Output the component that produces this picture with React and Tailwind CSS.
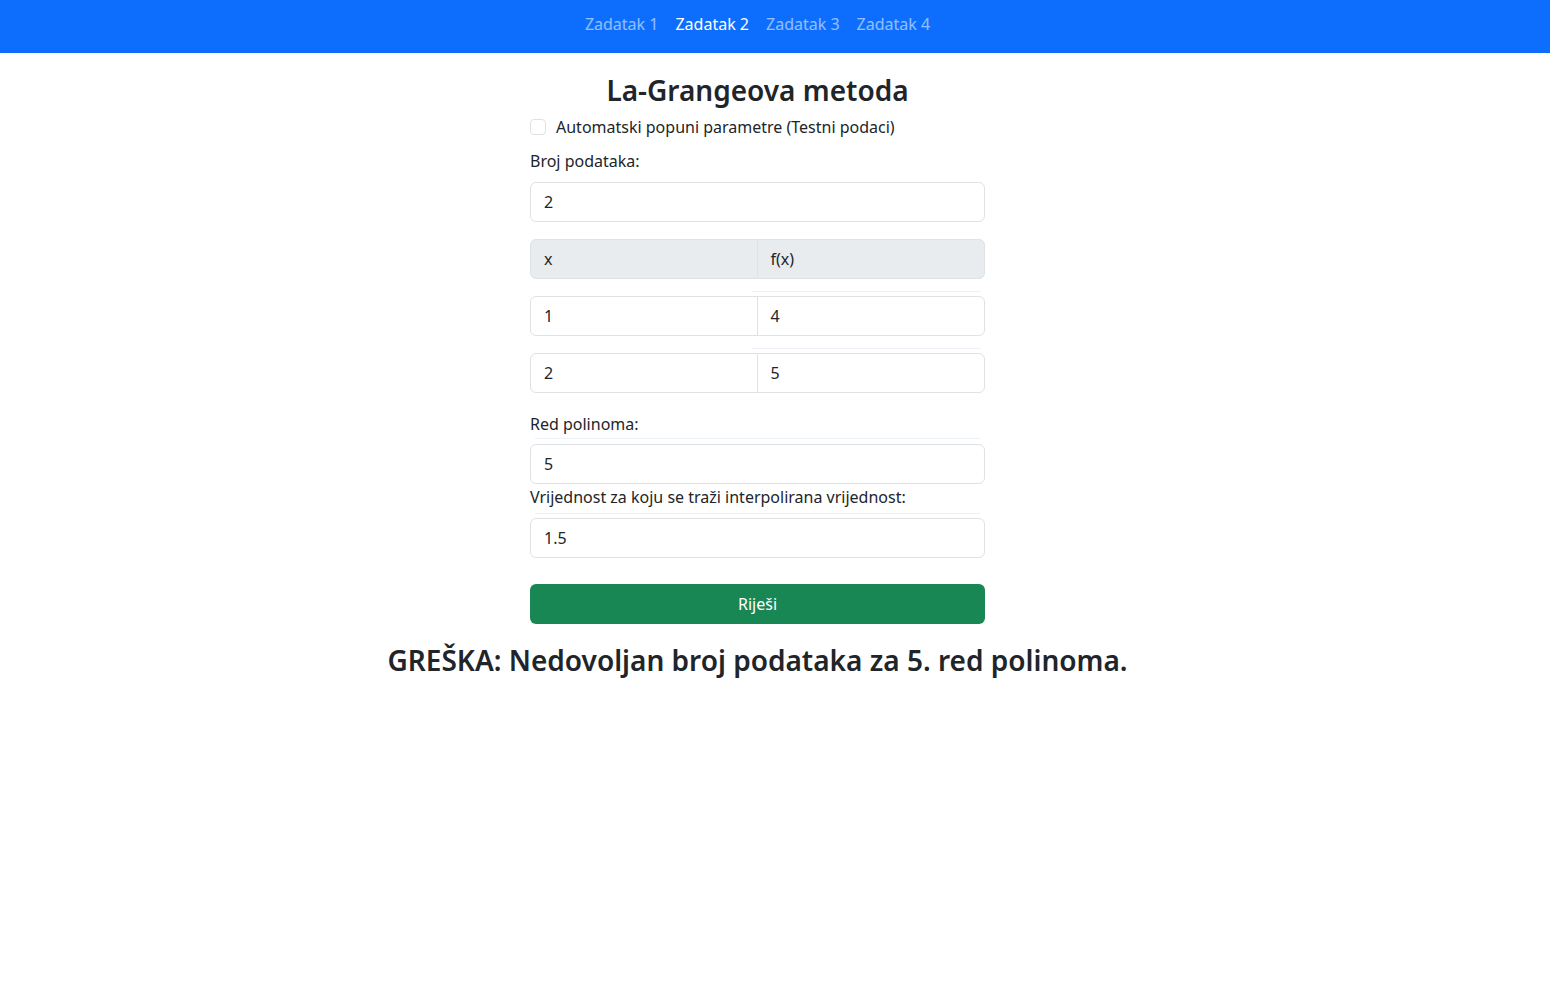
export default function App() {
    const font = { fontFamily: '"Segoe UI", "Noto Sans", "Liberation Sans", sans-serif' };
    const links = ["Zadatak 1", "Zadatak 2", "Zadatak 3", "Zadatak 4"];
    const rows = [["1", "4"], ["2", "5"]];

    const inputClass = "w-full h-10 px-[13px] border border-[#dee2e6] rounded-[6px] bg-white text-[16px] text-[#212529] outline-none";

    return (
        <div className="min-h-[990px] bg-white text-[#212529]" style={font}>
            {/* Navbar */}
            <nav className="h-[53px] bg-[#0d6efd]">
                <div className="w-[1515px] h-full flex justify-center items-center">
                    <div className="flex items-center gap-[1px] -mt-[5px]">
                        {links.map((l, i) => (
                            <a key={l} href="#" className={`px-2 text-[16px] leading-6 ${i === 1 ? "text-white" : "text-white/55"}`}>
                                {l}
                            </a>
                        ))}
                    </div>
                </div>
            </nav>

            <div className="w-[1515px]">
                <div className="w-[455px] mx-auto">
                    <h2 className="mt-[18px] text-[28px] leading-[38px] font-semibold text-center text-[#212529]">
                        La-Grangeova metoda
                    </h2>

                    <label className="mt-[6px] flex items-center h-6 text-[16px]">
                        <span className="w-4 h-4 border border-[#dee2e6] rounded-[4px] bg-white mr-[10px]" />
                        Automatski popuni parametre (Testni podaci)
                    </label>

                    <div className="mt-[10px] text-[16px] leading-6">Broj podataka:</div>
                    <input className={`mt-[9px] ${inputClass}`} defaultValue="2" readOnly />

                    {/* Table header */}
                    <div className="mt-[17px] h-10 flex bg-[#e9ecef] border border-[#dee2e6] rounded-[6px] text-[16px]">
                        <div className="w-1/2 flex items-center px-[13px] border-r border-[#dee2e6]">x</div>
                        <div className="w-1/2 flex items-center px-[13px]">f(x)</div>
                    </div>

                    {rows.map((r, i) => (
                        <div key={i}>
                            <div className="mt-[12px] ml-[222px] mr-[4px] border-t border-[#eef2f8]" />
                            <div className="mt-[4px] h-10 flex bg-white border border-[#dee2e6] rounded-[6px] text-[16px]">
                                <div className="w-1/2 flex items-center px-[13px] border-r border-[#dee2e6]">{r[0]}</div>
                                <div className="w-1/2 flex items-center px-[13px]">{r[1]}</div>
                            </div>
                        </div>
                    ))}

                    <div className="mt-[19px] text-[16px] leading-6">Red polinoma:</div>
                    <div className="mt-[2px] mx-[5px] border-t border-[#eef2f8]" />
                    <input className={`mt-[5px] ${inputClass}`} defaultValue="5" readOnly />

                    <div className="mt-[1px] text-[16px] leading-6">Vrijednost za koju se traži interpolirana vrijednost:</div>
                    <div className="mt-[4px] mx-[5px] border-t border-[#eef2f8]" />
                    <input className={`mt-[4px] ${inputClass}`} defaultValue="1.5" readOnly />

                    <button className="mt-[26px] w-full h-10 rounded-[6px] bg-[#198754] text-white text-[16px]">
                        Riješi
                    </button>
                </div>

                <h3 className="mt-[19px] text-[28px] leading-[34px] font-semibold text-center text-[#212529]">
                    GREŠKA: Nedovoljan broj podataka za 5. red polinoma.
                </h3>
            </div>
        </div>
    );
}
